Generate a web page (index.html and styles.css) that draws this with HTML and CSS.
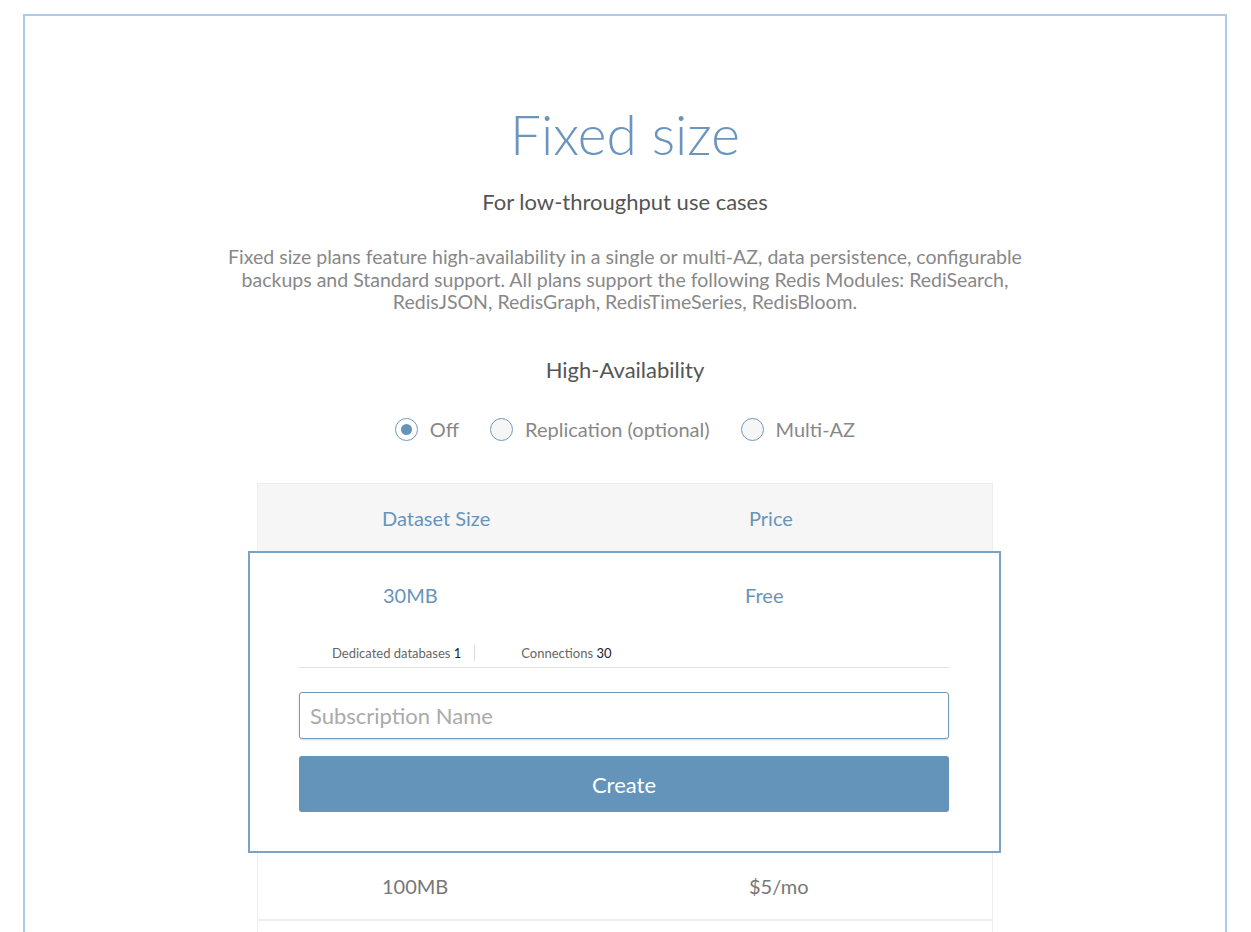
FILE: index.html
```html
<!DOCTYPE html>
<html>
<head>
<meta charset="utf-8">
<link rel="stylesheet" href="styles.css">
</head>
<body>
<div class="frame">
  <h1 class="title">Fixed size</h1>
  <h2 class="subtitle">For low-throughput use cases</h2>
  <p class="desc">Fixed size plans feature high-availability in a single or multi-AZ, data persistence, configurable backups and Standard support. All plans support the following Redis Modules: RediSearch, RedisJSON, RedisGraph, RedisTimeSeries, RedisBloom.</p>
  <h3 class="ha-title">High-Availability</h3>
  <div class="radios">
    <label class="radio"><span class="dot checked"></span>Off</label>
    <label class="radio"><span class="dot"></span>Replication (optional)</label>
    <label class="radio"><span class="dot"></span>Multi-AZ</label>
  </div>
  <div class="table">
    <div class="row head">
      <div class="cell">Dataset Size</div>
      <div class="cell">Price</div>
    </div>
    <div class="selected">
      <div class="row sel-row">
        <div class="cell">30MB</div>
        <div class="cell">Free</div>
      </div>
      <div class="stats">
        <span class="stat first">Dedicated databases <b>1</b></span>
        <span class="stat second">Connections <b>30</b></span>
      </div>
      <input class="name-input" type="text" placeholder="Subscription Name" autofocus>
      <button class="create">Create</button>
    </div>
    <div class="row plain">
      <div class="cell">100MB</div>
      <div class="cell">$5/mo</div>
    </div>
    <div class="row plain empty"></div>
  </div>
</div>
</body>
</html>
```

FILE: styles.css
```css
html, body {
  margin: 0;
  padding: 0;
  background: #fff;
  font-family: Lato, "Open Sans", sans-serif;
  overflow: hidden;
  height: 932px;
}
.frame {
  margin: 14px 24px 0 23px;
  border: 2px solid #acc9e6;
  border-bottom: none;
  padding-top: 85px;
  height: 1100px;
  box-sizing: border-box;
  display: flex;
  flex-direction: column;
  align-items: center;
}
.title {
  margin: 0;
  font-size: 55px;
  font-weight: 300;
  line-height: 1.2;
  color: #6a96bd;
}
.subtitle {
  margin: 22px 0 0;
  font-size: 22px;
  font-weight: 400;
  line-height: 1.2;
  color: #555;
}
.desc {
  margin: 31px 0 0;
  width: 805px;
  text-align: center;
  font-size: 19.5px;
  line-height: 22.5px;
  color: #888;
}
.ha-title {
  margin: 43px 0 0;
  font-size: 22px;
  font-weight: 400;
  line-height: 1.2;
  color: #555;
}
.radios {
  margin-top: 34px;
  display: flex;
  gap: 31px;
  height: 24px;
  align-items: center;
}
.radio {
  display: flex;
  align-items: center;
  gap: 12px;
  font-size: 20px;
  color: #888;
  line-height: 24px;
}
.dot {
  width: 21px;
  height: 21px;
  border-radius: 50%;
  border: 1.5px solid #6f9ac0;
  background: #f6f6f6;
  position: relative;
  box-sizing: content-box;
}
.dot.checked {
  background: #fff;
}
.dot.checked::after {
  content: "";
  position: absolute;
  left: 5px;
  top: 5px;
  width: 11px;
  height: 11px;
  border-radius: 50%;
  background: #6594ba;
}
.table {
  margin-top: 42px;
  width: 736px;
  border-left: 1px solid #eee;
  border-right: 1px solid #eee;
  box-sizing: border-box;
}
.row {
  display: flex;
  align-items: center;
  font-size: 20px;
  line-height: 24px;
}
.cell {
  flex: 1;
  padding-left: 124px;
}
.head {
  height: 68px;
  background: #f6f6f6;
  border-top: 1px solid #eee;
  box-sizing: border-box;
  color: #6894bb;
}
.selected {
  margin: 0 -9px 0 -10px;
  border: 2px solid #7aa2c7;
  padding: 30px 50px 39px 49px;
  display: flex;
  flex-direction: column;
  background: #fff;
}
.sel-row {
  margin: 0 -41px 0 -40px;
  color: #6894bb;
}
.sel-row .cell:last-child {
  padding-left: 117px;
}
.stats {
  margin-top: 38px;
  padding-bottom: 6px;
  border-bottom: 1px solid #e2e2e2;
  display: flex;
  align-items: center;
  font-size: 13px;
  line-height: 16px;
  color: #666;
}
.stat b {
  font-weight: 400;
  color: #222;
}
.stat.first {
  padding-left: 33px;
  padding-right: 13px;
  border-right: 1px solid #ddd;
}
.stat.second {
  margin-left: 46px;
}
.name-input {
  margin-top: 24px;
  height: 47px;
  box-sizing: border-box;
  border: 1px solid #6f9ac0;
  border-radius: 3px;
  box-shadow: 0 1px 2px rgba(0,0,0,0.15);
  padding: 0 10px;
  font-family: Lato, sans-serif;
  font-size: 22px;
  color: #555;
  outline: none;
  caret-color: #333;
}
.name-input::placeholder {
  color: #aaa;
}
.create {
  margin-top: 17px;
  height: 56px;
  border: none;
  border-radius: 3px;
  background: #6594ba;
  color: #fff;
  font-family: Lato, sans-serif;
  font-size: 22px;
  cursor: pointer;
}
.plain {
  height: 68px;
  border-bottom: 2px solid #eee;
  box-sizing: border-box;
  color: #777;
}
```
